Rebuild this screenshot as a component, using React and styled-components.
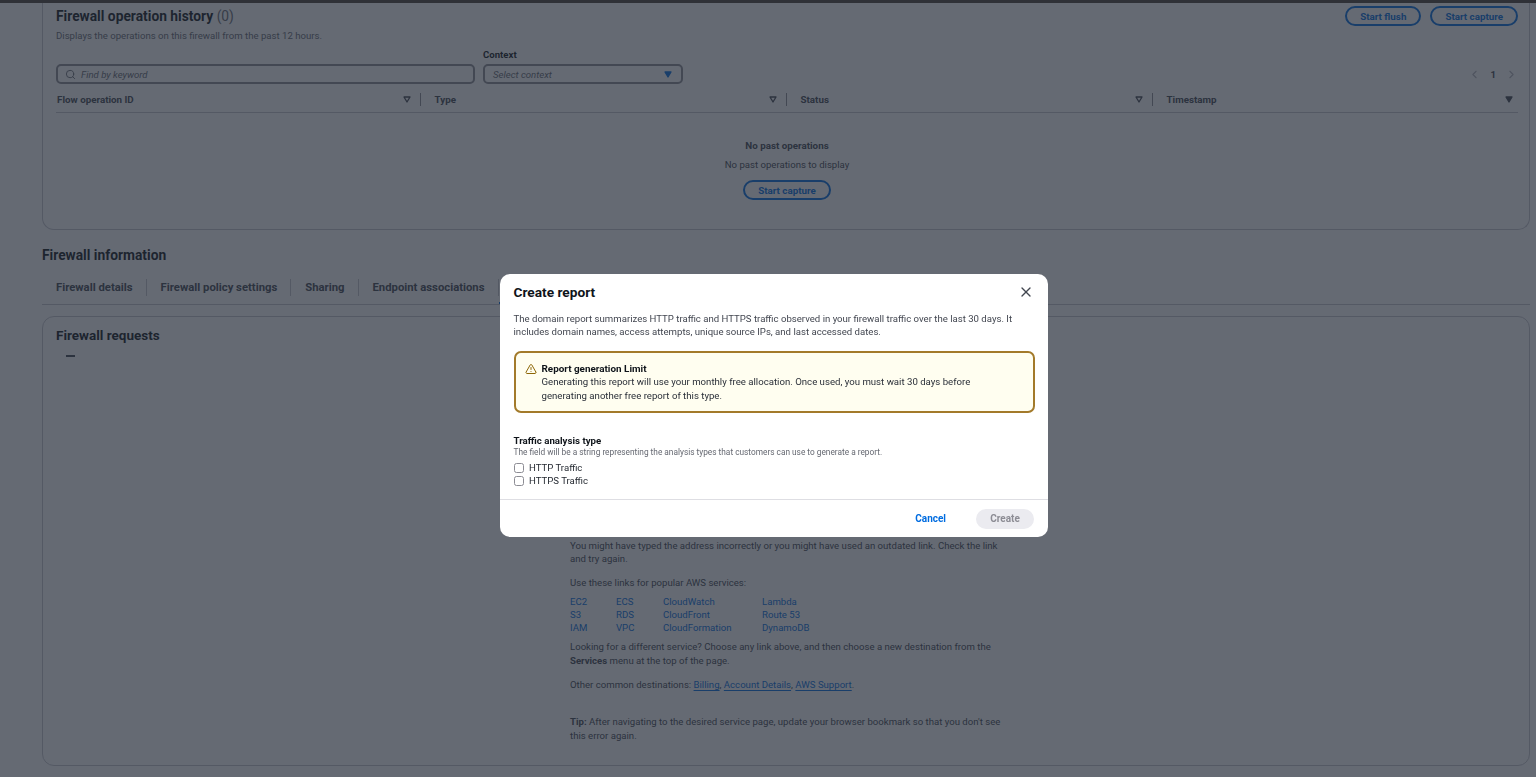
import React from "react";
import styled, { createGlobalStyle } from "styled-components";
import { Search, X, TriangleAlert, ChevronLeft, ChevronRight } from "lucide-react";

const FONT = `Roboto, "Noto Sans", sans-serif`;

const Global = createGlobalStyle`
  html, body {
    margin: 0;
    height: 100%;
    overflow: hidden;
    background: #fff;
    font-family: ${FONT};
    font-size: 9.6px;
    color: #0f141a;
  }
`;

const TopBar = styled.div`
  height: 3px;
  background: #2f3137;
  position: relative;
  z-index: 2;
`;

const Page = styled.div`
  padding: 0 6px 0 42px;
`;

const HistoryCard = styled.section`
  height: 227px;
  box-sizing: border-box;
  border: 1px solid #c6c6cd;
  border-top: none;
  border-radius: 0 0 12px 12px;
  padding: 0 11px 0 13px;
`;

const CardHead = styled.div`
  display: flex;
  justify-content: space-between;
  height: 26px;
  padding-top: 3px;
  box-sizing: border-box;
`;

const CardTitle = styled.h2`
  margin: 0;
  font-size: 13.8px;
  line-height: 20px;
  font-weight: 700;
  color: #0f141a;
  span {
    font-weight: 400;
    color: #656871;
  }
`;

const Actions = styled.div`
  display: flex;
  gap: 9px;
`;

const OutlineButton = styled.button`
  height: 20px;
  box-sizing: border-box;
  padding: 0 13px;
  border: 2px solid #006ce0;
  border-radius: 10px;
  background: none;
  color: #006ce0;
  font: 700 9.8px ${FONT};
`;

const Sub = styled.p`
  margin: 0;
  line-height: 14px;
  color: #656871;
  font-size: 9.6px;
`;

const FilterRow = styled.div`
  display: flex;
  align-items: flex-end;
  gap: 8px;
  margin-top: 5px;
`;

const SearchField = styled.div`
  width: 419px;
  height: 20px;
  box-sizing: border-box;
  border: 2px solid #8c8c94;
  border-radius: 5px;
  display: flex;
  align-items: center;
  gap: 5px;
  padding-left: 7px;
  color: #656871;
  font-style: italic;
  font-size: 9.6px;
`;

const SelectColumn = styled.div`
  display: flex;
  flex-direction: column;
`;

const FieldLabel = styled.label`
  font-weight: 700;
  font-size: 9.6px;
  line-height: 14px;
  margin-bottom: 2px;
  color: #0f141a;
`;

const SelectField = styled.div`
  width: 200px;
  height: 20px;
  box-sizing: border-box;
  border: 2px solid #8c8c94;
  border-radius: 5px;
  display: flex;
  align-items: center;
  justify-content: space-between;
  padding: 0 9px 0 8px;
  color: #656871;
  font-style: italic;
  font-size: 9.6px;
`;

const Pager = styled.div`
  margin-left: auto;
  display: flex;
  align-items: center;
  gap: 9px;
  height: 20px;
  font-weight: 700;
  font-size: 9.6px;
  color: #424650;
  svg {
    color: #b4b4bb;
  }
`;

const TableHead = styled.div`
  display: grid;
  grid-template-columns: 364px 366px 366px 1fr;
  height: 26px;
  padding-top: 2px;
  align-items: center;
  border-bottom: 1px solid #c6c6cd;
`;

const HeadCell = styled.div`
  display: flex;
  align-items: center;
  justify-content: space-between;
  font-weight: 700;
  font-size: 9.8px;
  color: #424650;
  padding: 0 ${(p) => (p.$last ? 5 : 9)}px 0 ${(p) => (p.$first ? 1 : 13.5)}px;
  border-left: ${(p) => (p.$first ? "none" : "1px solid #8c8c94")};
  height: 13px;
`;

const EmptyState = styled.div`
  display: flex;
  flex-direction: column;
  align-items: center;
  padding-top: 26px;
`;

const EmptyTitle = styled.div`
  font-weight: 700;
  font-size: 9.8px;
  line-height: 14px;
  color: #424650;
`;

const EmptyText = styled.div`
  font-size: 9.6px;
  line-height: 14px;
  margin: 5px 0 8px;
  color: #424650;
`;

const SectionTitle = styled.h2`
  margin: 15px 0 0;
  font-size: 13.8px;
  line-height: 20px;
  font-weight: 700;
`;

const Tabs = styled.div`
  display: flex;
  align-items: flex-end;
  height: 40px;
  box-sizing: border-box;
  border-bottom: 1px solid #c6c6cd;
`;

const Tab = styled.div`
  position: relative;
  display: flex;
  align-items: center;
  height: 33px;
  padding: 0 14px;
  font-weight: 700;
  font-size: 11.3px;
  color: #424650;
  &:not(:last-child)::after {
    content: "";
    position: absolute;
    right: 0;
    top: 8px;
    height: 17px;
    width: 1px;
    background: #c6c6cd;
  }
  ${(p) =>
    p.$active &&
    `
    color: #006ce0;
    box-shadow: inset 0 -2px 0 #006ce0;
  `}
`;

const RequestsCard = styled.section`
  margin-top: 11px;
  height: 450px;
  box-sizing: border-box;
  border: 1px solid #c6c6cd;
  border-radius: 12px;
  padding: 8px 13px;
`;

const RequestsTitle = styled.h3`
  margin: 0;
  font-size: 13.5px;
  line-height: 20px;
  font-weight: 700;
`;

const Dash = styled.div`
  width: 9px;
  height: 1.5px;
  margin: 10px 0 0 10px;
  background: #424650;
`;

const ErrorBody = styled.div`
  margin: 182px 0 0 514px;
  width: 440px;
  font-size: 9.6px;
  line-height: 13.6px;
  color: #424650;
`;

const Para = styled.p`
  margin: 0 0 ${(p) => p.$after ?? 10.4}px;
`;

const LinkGrid = styled.div`
  display: grid;
  grid-template-columns: 46px 47px 99px 1fr;
  line-height: 13.3px;
  margin-bottom: 5.4px;
`;

const ServiceLink = styled.a`
  color: #006ce0;
`;

const UnderLink = styled.a`
  color: #006ce0;
  text-decoration: underline;
  text-underline-offset: 2px;
`;

const Overlay = styled.div`
  position: fixed;
  inset: 0;
  background: rgba(35, 43, 55, 0.7);
`;

const Modal = styled.div`
  position: fixed;
  left: 500px;
  top: 274px;
  width: 548px;
  height: 263px;
  box-sizing: border-box;
  background: #fff;
  border-radius: 10px;
  display: flex;
  flex-direction: column;
`;

const ModalHead = styled.div`
  display: flex;
  align-items: center;
  justify-content: space-between;
  padding: 8px 14px 0 13.5px;
  height: 28px;
  box-sizing: border-box;
`;

const ModalTitle = styled.h2`
  margin: 0;
  font-size: 13.7px;
  font-weight: 700;
  color: #0f141a;
`;

const CloseBtn = styled.button`
  border: none;
  background: none;
  padding: 0;
  display: flex;
  color: #424650;
`;

const ModalContent = styled.div`
  flex: 1;
  padding: 10px 13.5px 0;
`;

const Intro = styled.p`
  margin: 0;
  font-size: 9.6px;
  line-height: 13.2px;
  color: #424650;
`;

const Alert = styled.div`
  margin-top: 13px;
  height: 62px;
  box-sizing: border-box;
  border: 2px solid #a37a2a;
  border-radius: 7px;
  background: #fffef0;
  display: flex;
  gap: 5px;
  padding: 9px 9px;
  color: #0f141a;
  svg {
    color: #8d6605;
    flex: none;
    margin-top: 1px;
  }
`;

const AlertTitle = styled.div`
  font-weight: 700;
  font-size: 9.9px;
  line-height: 13px;
`;

const AlertText = styled.div`
  font-size: 9.65px;
  line-height: 13.2px;
  color: #2a2f38;
`;

const FieldTitle = styled.div`
  margin-top: 21px;
  font-weight: 700;
  font-size: 9.7px;
  line-height: 13px;
`;

const FieldHint = styled.div`
  font-size: 8.3px;
  line-height: 11px;
  color: #656871;
`;

const CheckRow = styled.label`
  display: flex;
  align-items: center;
  gap: 5px;
  height: 13.2px;
  font-size: 9.6px;
  color: #1f242c;
  &:first-of-type {
    margin-top: 2.5px;
  }
`;

const CheckBox = styled.span`
  width: 10px;
  height: 10px;
  box-sizing: border-box;
  border: 1.3px solid #8c8c94;
  border-radius: 2.5px;
  margin-left: 0.5px;
`;

const ModalFoot = styled.div`
  height: 38px;
  box-sizing: border-box;
  border-top: 1px solid #dedee3;
  display: flex;
  align-items: center;
  justify-content: flex-end;
  gap: 30px;
  padding: 0 14px;
`;

const CancelBtn = styled.button`
  border: none;
  background: none;
  padding: 0;
  color: #006ce0;
  font: 700 10px ${FONT};
`;

const CreateBtn = styled.button`
  width: 58px;
  height: 20px;
  border: none;
  border-radius: 10px;
  background: #ebebf0;
  color: #8c8c94;
  font: 700 10px ${FONT};
`;

const Caret = ({ solid, color = "#424650" }) => (
  <svg width="8" height="7" viewBox="0 0 8 7">
    <path
      d="M1 1h6L4 6z"
      fill={solid ? color : "none"}
      stroke={color}
      strokeWidth="1.3"
      strokeLinejoin="round"
    />
  </svg>
);

const columns = ["Flow operation ID", "Type", "Status", "Timestamp"];
const services = [
  "EC2", "ECS", "CloudWatch", "Lambda",
  "S3", "RDS", "CloudFront", "Route 53",
  "IAM", "VPC", "CloudFormation", "DynamoDB",
];
const tabs = ["Firewall details", "Firewall policy settings", "Sharing", "Endpoint associations"];

const App = () => {
  return (
    <>
      <Global />
      <TopBar />
      <Page>
        <HistoryCard>
          <CardHead>
            <CardTitle>
              Firewall operation history <span>(0)</span>
            </CardTitle>
            <Actions>
              <OutlineButton>Start flush</OutlineButton>
              <OutlineButton>Start capture</OutlineButton>
            </Actions>
          </CardHead>
          <Sub>Displays the operations on this firewall from the past 12 hours.</Sub>
          <FilterRow>
            <SearchField>
              <Search size={11} />
              Find by keyword
            </SearchField>
            <SelectColumn>
              <FieldLabel>Context</FieldLabel>
              <SelectField>
                Select context
                <Caret solid color="#006ce0" />
              </SelectField>
            </SelectColumn>
            <Pager>
              <ChevronLeft size={13} />
              <span>1</span>
              <ChevronRight size={13} />
            </Pager>
          </FilterRow>
          <TableHead>
            {columns.map((c, i) => (
              <HeadCell key={c} $first={i === 0} $last={i === 3}>
                {c}
                <Caret solid={i === 3} />
              </HeadCell>
            ))}
          </TableHead>
          <EmptyState>
            <EmptyTitle>No past operations</EmptyTitle>
            <EmptyText>No past operations to display</EmptyText>
            <OutlineButton>Start capture</OutlineButton>
          </EmptyState>
        </HistoryCard>

        <SectionTitle>Firewall information</SectionTitle>
        <Tabs>
          {tabs.map((t) => (
            <Tab key={t}>{t}</Tab>
          ))}
          <Tab $active>Firewall requests</Tab>
        </Tabs>

        <RequestsCard>
          <RequestsTitle>Firewall requests</RequestsTitle>
          <Dash />
          <ErrorBody>
            <Para>
              You might have typed the address incorrectly or you might have used an outdated
              link. Check the link and try again.
            </Para>
            <Para $after={5}>Use these links for popular AWS services:</Para>
            <LinkGrid>
              {services.map((s) => (
                <ServiceLink key={s}>{s}</ServiceLink>
              ))}
            </LinkGrid>
            <Para>
              Looking for a different service? Choose any link above, and then choose a new
              destination from the <b>Services</b> menu at the top of the page.
            </Para>
            <Para $after={24}>
              Other common destinations: <UnderLink>Billing</UnderLink>,{" "}
              <UnderLink>Account Details</UnderLink>, <UnderLink>AWS Support</UnderLink>.
            </Para>
            <Para>
              <b>Tip:</b> After navigating to the desired service page, update your browser
              bookmark so that you don't see this error again.
            </Para>
          </ErrorBody>
        </RequestsCard>
      </Page>

      <Overlay />
      <Modal>
        <ModalHead>
          <ModalTitle>Create report</ModalTitle>
          <CloseBtn>
            <X size={16} />
          </CloseBtn>
        </ModalHead>
        <ModalContent>
          <Intro>
            The domain report summarizes HTTP traffic and HTTPS traffic observed in your firewall
            traffic over the last 30 days. It includes domain names, access attempts, unique
            source IPs, and last accessed dates.
          </Intro>
          <Alert>
            <TriangleAlert size={12} />
            <div>
              <AlertTitle>Report generation Limit</AlertTitle>
              <AlertText>
                Generating this report will use your monthly free allocation. Once used, you must
                wait 30 days before
                <br />
                generating another free report of this type.
              </AlertText>
            </div>
          </Alert>
          <FieldTitle>Traffic analysis type</FieldTitle>
          <FieldHint>
            The field will be a string representing the analysis types that customers can use to
            generate a report.
          </FieldHint>
          <CheckRow>
            <CheckBox />
            HTTP Traffic
          </CheckRow>
          <CheckRow>
            <CheckBox />
            HTTPS Traffic
          </CheckRow>
        </ModalContent>
        <ModalFoot>
          <CancelBtn>Cancel</CancelBtn>
          <CreateBtn>Create</CreateBtn>
        </ModalFoot>
      </Modal>
    </>
  );
};

export default App;
